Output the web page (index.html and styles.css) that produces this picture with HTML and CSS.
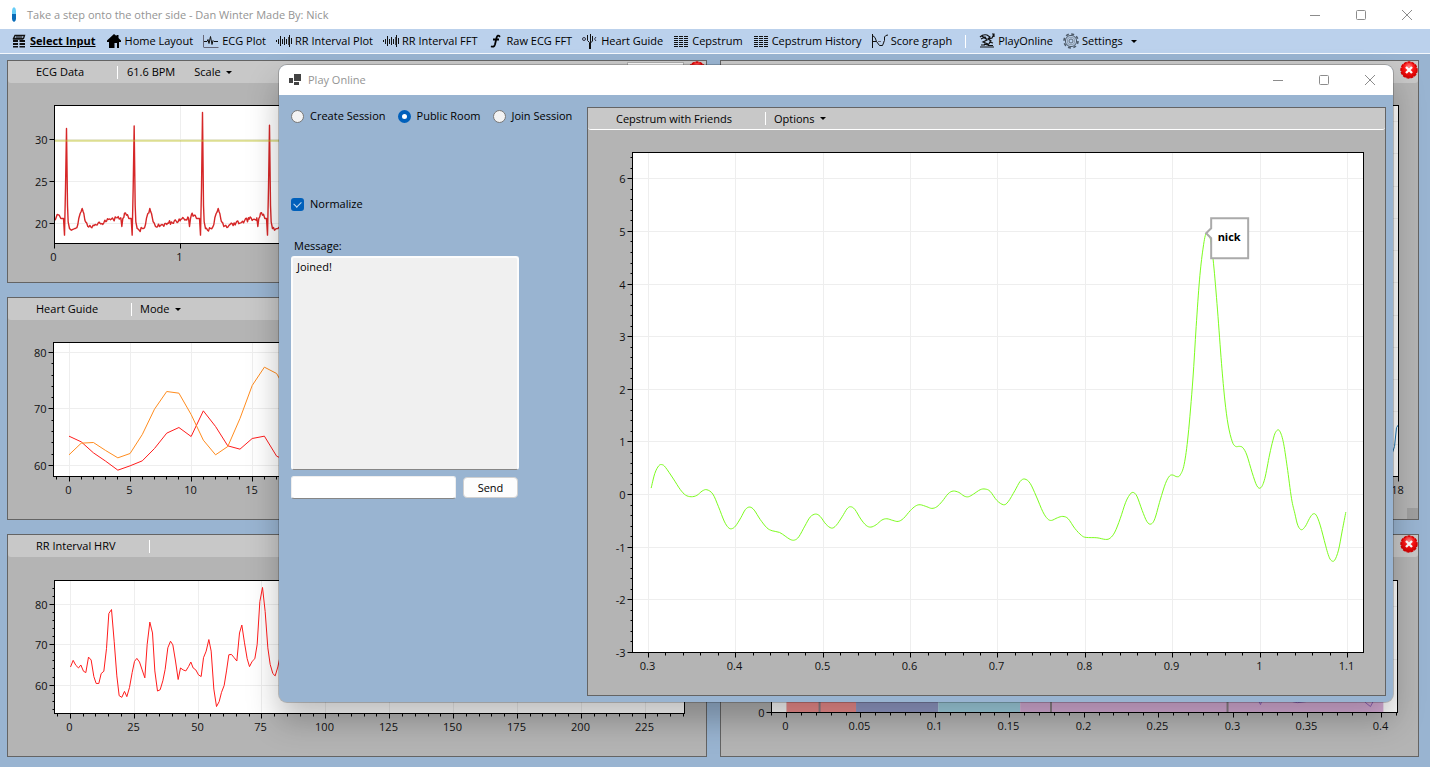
FILE: index.html
```html
<!DOCTYPE html>
<html lang="en">
<head>
<meta charset="utf-8">
<title>Take a step onto the other side</title>
<link rel="stylesheet" href="styles.css">
</head>
<body>
<svg class="defs" aria-hidden="true">
  <defs>
    <radialGradient id="ball" cx="50%" cy="30%" r="70%">
      <stop offset="0" stop-color="#ff8a8a"/><stop offset=".45" stop-color="#fb1414"/><stop offset="1" stop-color="#d00000"/>
    </radialGradient>
    <symbol id="i-close" viewBox="0 0 18 18">
      <circle cx="9" cy="9" r="8" fill="url(#ball)" stroke="#d40000" stroke-width="1.4" stroke-dasharray="3 1"/>
      <path d="M6 6l6 6M12 6l-6 6" stroke="#fff" stroke-width="2.4"/>
    </symbol>
    <symbol id="i-min" viewBox="0 0 12 12"><path d="M1 6.5h10" stroke="#8c8c8c" fill="none"/></symbol>
    <symbol id="i-max" viewBox="0 0 12 12"><rect x="1.5" y="1.5" width="9" height="9" rx="1" stroke="#8c8c8c" fill="none"/></symbol>
    <symbol id="i-x" viewBox="0 0 12 12"><path d="M1 1l10 10M11 1L1 11" stroke="#8c8c8c" fill="none"/></symbol>
    <symbol id="i-wave" viewBox="0 0 16 16"><path d="M.5 7v2M2.500 6v5M4.500 3v10M6.500 6v5M8.500 4v8M10.500 6v5M13.500 2v12M15.500 5v6" stroke="#111"/><path d="M12.500 4v8" stroke="#555"/></symbol>
    <symbol id="i-cep" viewBox="0 0 16 16"><path d="M1 3.500h14M1 5.500h14M1 7.500h14M1 9.500h14M1 11.500h14M1 13.500h14" stroke="#111" stroke-dasharray="4 1"/></symbol>
  </defs>
</svg>

<div class="app">
  <header class="titlebar">
    <svg class="app-icon" viewBox="0 0 6 16"><path d="M3 0Q5 1 5 4v4H1V4Q1 1 3 0z" fill="#66cdf7"/><path d="M1 7h4v5Q5 14 3 15Q1 14 1 12z" fill="#0a6cb8"/></svg>
    <h1 class="titlebar-text">Take a step onto the other side - Dan Winter Made By: Nick</h1>
    <div class="win-buttons">
      <button aria-label="Minimize"><svg><use href="#i-min"/></svg></button>
      <button aria-label="Maximize"><svg><use href="#i-max"/></svg></button>
      <button aria-label="Close"><svg><use href="#i-x"/></svg></button>
    </div>
  </header>

  <nav class="toolbar">
    <button class="tool tool-active"><svg viewBox="0 0 16 16"><path d="M2.500 5.500L4 2.500h9.500l-1 3zM2 6h10" fill="none" stroke="#111" stroke-width="1.300"/><path d="M5 4h6" stroke="#111"/><path d="M2 7h5v2H2zM8.500 7H14v2H8.500zM2 10h5v2H2zM8.500 10H14v2H8.500zM2 13h5v1.500H2zM8.500 13H14v1.500H8.500z" fill="#111"/></svg>Select Input</button>
    <button class="tool"><svg viewBox="0 0 16 16"><path d="M1 7.500L8 1l2.500 2V2h2v3L15 7.500V9h-2v6h-2v-5H8.500v5H3V9H1z" fill="#000"/></svg>Home Layout</button>
    <button class="tool"><svg viewBox="0 0 16 16"><path d="M.5 2v12M.5 14.500h15" stroke="#667" fill="none"/><path d="M1 8.500h3l1-2 1 4 1.500-7 1.500 8 1-4 1 1h4" stroke="#111" fill="none"/></svg>ECG Plot</button>
    <button class="tool"><svg><use href="#i-wave"/></svg>RR Interval Plot</button>
    <button class="tool"><svg><use href="#i-wave"/></svg>RR Interval FFT</button>
    <button class="tool"><svg viewBox="0 0 16 16"><path d="M12 3.800Q9.500 1 8.500 5L7 11.500q-1 3.300-4 1.700M5 6.500h6" fill="none" stroke="#000" stroke-width="1.800"/></svg>Raw ECG FFT</button>
    <button class="tool"><svg viewBox="0 0 16 16"><path d="M5.500 2v5.500l2 2V16M8.500 1v15M10.500 3v5l-2 2" fill="none" stroke="#111"/><circle cx="2" cy="6" r="1.500" fill="none" stroke="#334"/><path d="M14 4q-3 2 0 4" fill="none" stroke="#334"/></svg>Heart Guide</button>
    <button class="tool"><svg><use href="#i-cep"/></svg>Cepstrum</button>
    <button class="tool"><svg><use href="#i-cep"/></svg>Cepstrum History</button>
    <button class="tool"><svg viewBox="0 0 16 16"><path d="M.5 1v14M.5 2.500q3 1 4 6H.5M4.500 8.500l3 4h3l2-5V4q1-2 3.500-2" fill="none" stroke="#111"/><path d="M6 8.500h3M11 8.500h2" stroke="#667"/></svg>Score graph</button>
    <span class="sep"></span>
    <button class="tool"><svg viewBox="0 0 16 16"><path d="M1 4q3-3 7-2l3 2-2 2 3 2-3 4-4-1M2 6l4-2 2 3-4 2 5 2M10 6l3-1 2-4M13 1h2v3M3 3l4 3M1 14h14M2 12h4M9 12.500h5M10 9l4 1" fill="none" stroke="#111" stroke-width="1.200"/></svg>PlayOnline</button>
    <button class="tool tool-menu"><svg viewBox="0 0 16 16"><circle cx="8" cy="8" r="7" fill="none" stroke="#4d5a68" stroke-width="1.600" stroke-dasharray="3 2.500"/><circle cx="8" cy="8" r="5.600" fill="none" stroke="#4d5a68"/><circle cx="8" cy="8" r="3.800" fill="none" stroke="#8d9aa8"/><circle cx="8" cy="8" r="2" fill="none" stroke="#5d6a78"/></svg>Settings<i class="caret"></i></button>
  </nav>

  <main class="workspace">
    <section class="panel">
      <div class="panel-head">
        <h2>ECG Data</h2><span class="sep"></span><span class="bpm">61.6 BPM</span>
        <button class="menu">Scale<i class="caret"></i></button>
        <select class="channel" aria-label="Channel"><option></option></select>
        <button class="close" aria-label="Close ECG Data"><svg><use href="#i-close"/></svg></button>
      </div>
      <div class="chart" data-chart="ecg"></div>
    </section>
    <section class="panel panel-tall">
      <div class="panel-head"><button class="close" aria-label="Close Cepstrum"><svg><use href="#i-close"/></svg></button></div>
      <div class="chart" data-chart="cepstrum"></div>
      <span class="grip"></span>
    </section>
    <section class="panel">
      <div class="panel-head"><h2>Heart Guide</h2><span class="sep"></span><button class="menu">Mode<i class="caret"></i></button></div>
      <div class="chart" data-chart="heart"></div>
    </section>
    <section class="panel">
      <div class="panel-head"><h2>RR Interval HRV</h2><span class="sep"></span></div>
      <div class="chart" data-chart="rr"></div>
    </section>
    <section class="panel">
      <div class="panel-head"><button class="close" aria-label="Close RR Interval FFT"><svg><use href="#i-close"/></svg></button></div>
      <div class="chart" data-chart="fft"></div>
    </section>
  </main>

  <div class="dialog" role="dialog" aria-labelledby="dialog-title">
    <header class="titlebar dialog-bar">
      <svg class="form-icon" viewBox="0 0 12 12"><path d="M0 4h4v5H0zM5 0h7v7H5zM5 8h5v3H5z" fill="#444"/></svg>
      <h2 class="titlebar-text" id="dialog-title">Play Online</h2>
      <div class="win-buttons">
        <button aria-label="Minimize"><svg><use href="#i-min"/></svg></button>
        <button aria-label="Maximize"><svg><use href="#i-max"/></svg></button>
        <button aria-label="Close"><svg><use href="#i-x"/></svg></button>
      </div>
    </header>
    <div class="dialog-body">
      <form class="side">
        <div class="modes">
          <label><input type="radio" name="mode">Create Session</label>
          <label><input type="radio" name="mode" checked>Public Room</label>
          <label><input type="radio" name="mode">Join Session</label>
        </div>
        <label class="normalize"><input type="checkbox" checked>Normalize</label>
        <label class="log-label" for="log">Message:</label>
        <textarea id="log" readonly>Joined!</textarea>
        <div class="send-row">
          <input type="text" aria-label="New message">
          <button type="button">Send</button>
        </div>
      </form>
      <section class="panel panel-friends">
        <div class="panel-head"><h2>Cepstrum with Friends</h2><span class="sep"></span><button class="menu">Options<i class="caret"></i></button></div>
        <div class="chart" data-chart="friends"></div>
      </section>
    </div>
  </div>
</div>
<script src="charts.js"></script>
</body>
</html>
```

FILE: styles.css
```css
* { box-sizing: border-box; }

body {
  margin: 0;
  font-family: "Open Sans", "Noto Sans", sans-serif;
  font-size: 11px;
  line-height: 16px;
  color: #000;
}

button, input, select, textarea { font: inherit; color: inherit; }
button { border: 0; padding: 0; background: none; }
h1, h2 { margin: 0; font-size: inherit; font-weight: normal; white-space: nowrap; }

.defs { position: absolute; width: 0; height: 0; }

.app {
  position: relative;
  display: flex;
  flex-direction: column;
  min-height: 100vh;
  background: #99b4d1;
}

.titlebar {
  display: flex;
  align-items: center;
  height: 29px;
  padding-left: 11px;
  background: #fff;
}
.app-icon { width: 6px; height: 16px; margin-right: 10px; }
.form-icon { width: 12px; height: 12px; margin-right: 7px; }
.titlebar-text { color: #949494; }
.win-buttons { display: flex; margin-left: auto; }
.win-buttons button { display: grid; place-items: center; width: 46px; height: 27px; }
.win-buttons svg { width: 12px; height: 12px; }

.toolbar {
  display: flex;
  align-items: center;
  gap: 10px;
  height: 25px;
  padding-left: 11px;
  background: #bbd1ec;
  border-bottom: 1px solid #f4f8fd;
}
.tool { display: flex; align-items: center; gap: 3px; white-space: nowrap; }
.tool svg { width: 16px; height: 16px; }
.tool-active { font-weight: bold; text-decoration: underline; }
.toolbar .sep { margin: 0 3px; }

.sep { width: 1px; height: 13px; background: #fff; }
.caret {
  margin-left: 5px;
  border: 3px solid transparent;
  border-top-color: #000;
  border-bottom: 0;
}

.workspace {
  flex: 1;
  display: grid;
  grid-template-columns: 1fr 1fr;
  grid-template-rows: repeat(3, minmax(0, 1fr));
  gap: 14px 13px;
  padding: 6px 11px 10px 7px;
}

.panel {
  position: relative;
  display: flex;
  flex-direction: column;
  min-width: 0;
  background: #b4b4b4;
  border: 1px solid #646464;
}
.panel-tall { grid-row: span 2; }
.panel-head {
  display: flex;
  align-items: center;
  height: 22px;
  padding-left: 28px;
  background: #c8c8c8;
  border-radius: 0 0 3px 3px;
}
.panel-head h2 { margin-right: 33px; }
.bpm { margin: 0 19px 0 9px; }
.menu { display: flex; align-items: center; }
.sep + .menu { margin-left: 8px; }
.channel {
  align-self: flex-start;
  width: 57px;
  height: 20px;
  margin: 1px 4px 0 auto;
  background: #f4f4f4;
  border: 1px solid #aaa;
}
.close { align-self: flex-start; width: 18px; height: 18px; margin-left: auto; }
.channel + .close { margin-left: 0; }
.close svg { display: block; width: 18px; height: 18px; }
.grip { position: absolute; right: 0; bottom: 0; width: 11px; height: 11px; background: #9f9f9f; }

.chart { flex: 1; min-height: 0; overflow: hidden; }
.chart svg { display: block; }
.chart text { fill: #111; }
.chart .callout { font-weight: bold; fill: #000; }

.dialog {
  position: absolute;
  inset: 65px 37px 65px 279px;
  display: flex;
  flex-direction: column;
  overflow: hidden;
  background: #99b4d1;
  border-radius: 8px;
  box-shadow: 0 0 0 1px rgba(0, 0, 0, .2), 0 18px 32px rgba(0, 0, 0, .26);
}
.dialog-bar { flex: none; height: 30px; padding-left: 10px; }

.dialog-body { flex: 1; display: flex; min-height: 0; }
.side {
  flex: none;
  display: flex;
  flex-direction: column;
  align-items: flex-start;
  width: 308px;
  padding: 13px 0 0 12px;
}
.modes { display: flex; gap: 12px; }
.modes label, .normalize { display: flex; align-items: center; gap: 6px; white-space: nowrap; }
.side input[type="radio"], .side input[type="checkbox"] { width: 13px; height: 13px; margin: 0; }
.side input[type="radio"] {
  appearance: none;
  background: #f3f3f3;
  border: 1px solid #777;
  border-radius: 50%;
}
.side input[type="radio"]:checked { background: #fff; border: 4px solid #0060bb; }
.side input[type="checkbox"] {
  appearance: none;
  display: grid;
  place-items: center;
  background: #0060bb;
  border-radius: 3px;
}
.side input[type="checkbox"]::after {
  content: "";
  width: 6px;
  height: 4px;
  margin-top: -2px;
  border: solid #c4dcf2;
  border-width: 0 0 1px 1px;
  rotate: -45deg;
}
.normalize { margin-top: 72px; }
.log-label { margin: 26px 0 2px 3px; }
.side textarea {
  width: 228px;
  height: 214px;
  padding: 1px 4px;
  resize: none;
  background: #f0f0f0;
  border: 2px solid #fcfcfc;
  border-bottom: 1px solid #868686;
  border-radius: 3px;
  outline: 0;
}
.send-row { display: flex; align-items: center; gap: 7px; margin-top: 6px; }
.send-row input {
  width: 165px;
  height: 23px;
  background: #fff;
  border: 1px solid #eee;
  border-bottom-color: #868686;
  border-radius: 3px;
}
.send-row button {
  width: 55px;
  height: 21px;
  background: #fdfdfd;
  border: 1px solid #d0d0d0;
  border-radius: 4px;
}

.panel-friends { flex: 1; margin: 12px 7px 6px 0; }
.panel-friends .panel-head { border-bottom: 1px solid #fff; }
```

FILE: charts.js
```js
const NS = "http://www.w3.org/2000/svg";

// One heartbeat, as offsets from the R peak.
const BEAT = [[-9, 490], [-6, 540], [-3, 400], [0, 0], [3, 450], [5, 500], [9, 520], [15, 525], [25, 520], [34, 508], [41, 475], [47, 460],
  [52, 475], [57, 500], [64, 514], [80, 510], [100, 504], [120, 498], [140, 492], [163, 488], [166, 514], [169, 490], [174, 474], [180, 480], [187, 490]];

function ecgPoints() {
  const peaks = [[199, 220], [402, 212], [607, 172], [808, 210], [1011, 215], [1214, 220], [1417, 200], [1620, 214], [1823, 210]];
  const points = [[165, 495], [171, 478], [177, 480], [182, 490]];
  let seed = 7;
  const noise = () => (seed = (seed * 73 + 41) % 997) / 997 * 14 - 7;
  for (const [px, top] of peaks) {
    BEAT.forEach(([dx, y], i) => {
      points.push([px + dx, i === 3 ? top : y]);
      const next = BEAT[i + 1];
      if (i > 5 && next) {
        for (let x = dx + 3; x < next[0] - 1; x += 3) {
          points.push([px + x, y + (next[1] - y) * (x - dx) / (next[0] - dx) + noise()]);
        }
      }
    });
  }
  return points;
}

const pairs = text => text.trim().split(/\s+/).map(p => p.split(",").map(Number));
const indexed = list => list.map((y, x) => [x, y]);

// margin: top, right, bottom, left. x and y: axis range, label step, minor step.
// box: left, right, bottom, top of the plot area in the units of the points.
const CHARTS = {
  ecg: {
    margin: [22, 22, 39, 46], x: [0, 5, 1, 0], y: [17.6, 34.05, 5, 0],
    level: 29.85,
    series: [{ color: "#d62728", width: 1.4, box: [163, 2053, 565, 151], points: ecgPoints() }]
  },
  heart: {
    margin: [22, 22, 43, 45], x: [-1.27, 50.4, 5, 1], y: [58.05, 81.77, 10, 2],
    series: [
      { color: "#ff1c1c", box: [-1.27, 50.4, 574, 172], points: indexed([453, 470, 503, 528, 555, 542, 527, 490, 444, 427, 454, 377, 424, 482, 492, 460, 453, 513, 530]) },
      { color: "#ff8c1e", box: [-1.27, 50.4, 574, 172], points: indexed([509, 474, 472, 496, 518, 505, 448, 372, 319, 324, 388, 465, 509, 484, 400, 301, 246, 265, 330]) }
    ]
  },
  rr: {
    margin: [23, 22, 43, 46], x: [-6.2, 240.4, 25, 5], y: [52.97, 85.9, 10, 2],
    series: [{
      color: "#ff1c1c", box: [163, 2053, 569, 166], points: pairs(`211,428 219,408 227,423 235,431 242,422 250,441 257,445 265,398 273,407 281,457 288,478 296,478 303,448 311,441
        319,372 326,266 334,254 342,350 350,455 357,515 365,520 373,502 380,518 388,490 396,445 403,411 410,402 418,413 426,437 434,461 441,360 449,292 457,325
        464,440 472,501 480,497 488,470 495,435 503,370 511,350 518,361 526,410 534,466 541,431 549,437 557,440 565,427 572,413 579,431 587,437 595,452 603,457
        610,400 618,380 626,345 633,380 641,495 649,548 657,533 664,505 672,484 679,440 686,391 694,390 702,400 710,410 718,325 725,301 733,355 741,403 748,427
        756,411 764,403 771,360 779,230 787,187 795,260 803,370 810,420 818,448 825,455 833,428 840,395`)
    }]
  },
  cepstrum: {
    margin: [22, 21, 43, 45], x: [0, 18, 2, 0], y: [-1, 10.5, 1, 0],
    series: [{ color: "#1f77b4", box: [765, 1397, 476, 104], points: [[1385, 470], [1393, 446], [1395, 427], [1397, 424]] }]
  },
  fft: {
    margin: [23, 22, 44, 50], x: [-0.0101, 0.4105, 0.05, 0.01], y: [0, 2.48, 1, 0],
    bands: [[0, 0.0467, "#f18f8f"], [0.0467, 0.102, "#949cc9"], [0.102, 0.157, "#a3d4e5"], [0.157, 0.401, "#dab0da"]],
    marks: [0.0222, 0.1777, 0.2963],
    series: [{ color: "#9467bd", box: [771, 1397, 713, 579], points: [[1248, 690], [1257, 699], [1260, 705], [1262, 699], [1288, 690], [1292, 702], [1297, 703], [1305, 702], [1309, 698], [1360, 690], [1365, 703], [1370, 707], [1373, 701], [1376, 690]] }]
  },
  friends: {
    margin: [22, 22, 43, 44], x: [0.2817, 1.1183, 0.1, 0.02], y: [-3, 6.5, 1, 0.2],
    callout: [1878, 100, "nick"],
    series: [{
      color: "#7cfc1e", smooth: true, box: [157, 2350, 1357, -142], points: pairs(`213,864 224,820 236,797 246,794 256,802 280,837 300,868 316,885 333,890 350,886 366,873 380,869 398,882
        415,920 432,963 444,982 454,986 466,978 482,953 496,928 509,921 522,930 540,958 560,983 576,992 598,997 615,1008 630,1018 643,1020 656,1010 674,978
        690,951 706,942 720,949 737,972 754,984 768,976 786,950 800,927 811,920 824,928 842,957 858,976 872,981 888,974 905,960 920,956 938,961 954,964 970,955
        990,932 1006,918 1020,914 1040,920 1055,925 1070,920 1086,904 1104,881 1119,873 1136,877 1152,888 1165,890 1180,882 1200,869 1215,867 1230,874 1250,901
        1270,914 1284,905 1304,872 1320,844 1334,837 1350,850 1368,888 1388,935 1402,956 1414,961 1432,953 1448,949 1464,956 1484,985 1504,1006 1518,1012
        1550,1013 1576,1018 1590,1014 1604,996 1620,956 1636,908 1648,885 1658,877 1670,888 1686,931 1700,964 1712,972 1724,956 1740,900 1756,850 1768,828
        1778,825 1790,830 1800,825 1812,793 1824,705 1838,540 1848,380 1858,240 1868,150 1878,100 1890,115 1900,190 1912,330 1924,490 1934,600 1944,675
        1956,724 1966,739 1978,739 1988,743 2000,765 2016,818 2030,857 2042,863 2054,835 2068,765 2078,722 2086,697 2097,691 2109,724 2121,800 2134,895
        2144,940 2153,976 2164,989 2176,978 2188,955 2198,942 2208,945 2220,975 2236,1035 2244,1063 2252,1080 2263,1081 2275,1050 2286,993 2297,936`)
    }]
  }
};

function add(parent, name, attrs, text) {
  const node = document.createElementNS(NS, name);
  for (const key in attrs) node.setAttribute(key, attrs[key]);
  if (text !== undefined) node.textContent = text;
  parent.append(node);
  return node;
}

function steps(min, max, step) {
  const out = [];
  if (!step) return out;
  for (let i = Math.ceil(min / step - 1e-6); i * step <= max + 1e-6; i++) out.push(+(i * step).toFixed(4));
  return out;
}

function curve(points, smooth) {
  if (!smooth) return "M" + points.map(p => p.join(" ")).join("L");
  let d = "M" + points[0].join(" ");
  for (let i = 0; i < points.length - 1; i++) {
    const a = points[i - 1] || points[i], b = points[i], c = points[i + 1], e = points[i + 2] || c;
    d += `C${b[0] + (c[0] - a[0]) / 6} ${b[1] + (c[1] - a[1]) / 6} ${c[0] - (e[0] - b[0]) / 6} ${c[1] - (e[1] - b[1]) / 6} ${c[0]} ${c[1]}`;
  }
  return d;
}

function draw(host) {
  const chart = CHARTS[host.dataset.chart];
  const W = host.clientWidth, H = host.clientHeight;
  host.replaceChildren();
  const svg = add(host, "svg", { width: W, height: H });
  const [mt, mr, mb, ml] = chart.margin;
  const l = ml + 0.5, t = mt + 0.5, r = W - mr + 0.5, b = H - mb + 0.5;
  const [x0, x1, xs, xm] = chart.x, [y0, y1, ys, ym] = chart.y;
  const X = v => l + (v - x0) / (x1 - x0) * (r - l);
  const Y = v => b - (v - y0) / (y1 - y0) * (b - t);
  const snap = v => Math.floor(v) + 0.5;

  add(svg, "rect", { x: l, y: t, width: r - l, height: b - t, fill: "#fff" });
  let grid = "", ticks = "";
  for (const v of steps(x0, x1, xs)) {
    const x = snap(X(v));
    grid += `M${x} ${t}V${b}`;
    ticks += `M${x} ${b}v5`;
    add(svg, "text", { x: x - 1, y: b + 17, "text-anchor": "middle" }, v);
  }
  for (const v of steps(y0, y1, ys)) {
    const y = snap(Y(v));
    grid += `M${l} ${y}H${r}`;
    ticks += `M${l} ${y}h-5`;
    add(svg, "text", { x: l - 7, y: y + 4, "text-anchor": "end" }, v);
  }
  for (const v of steps(x0, x1, xm)) ticks += `M${snap(X(v))} ${b}v3`;
  for (const v of steps(y0, y1, ym)) ticks += `M${l} ${snap(Y(v))}h-2`;
  add(svg, "path", { d: grid, stroke: "#eee", fill: "none" });

  for (const [from, to, fill] of chart.bands || []) add(svg, "rect", { x: X(from), y: t, width: X(to) - X(from), height: b - t, fill });
  for (const v of chart.marks || []) add(svg, "path", { d: `M${X(v)} ${t}V${b}`, stroke: "#8c8088", "stroke-width": 2 });

  for (const s of chart.series) {
    const [bl, br, bb, bt] = s.box;
    const points = s.points.map(([x, y]) => [l + (x - bl) / (br - bl) * (r - l), b - (y - bb) / (bt - bb) * (b - t)]);
    add(svg, "path", { d: curve(points, s.smooth), fill: "none", stroke: s.color, "stroke-width": s.width || 1, "stroke-linejoin": "round" });
  }
  if (chart.level) add(svg, "path", { d: `M${l} ${Y(chart.level)}H${r}`, stroke: "#bcbd22", "stroke-opacity": 0.5, "stroke-width": 2 });

  add(svg, "rect", { x: l, y: t, width: r - l, height: b - t, fill: "none", stroke: "#000" });
  add(svg, "path", { d: ticks, stroke: "#000", fill: "none" });

  if (chart.callout) {
    const [bl, br, bb, bt] = chart.series[0].box;
    const [cx, cy, label] = chart.callout;
    const x = l + (cx - bl) / (br - bl) * (r - l), y = b - (cy - bb) / (bt - bb) * (b - t);
    add(svg, "path", { d: `M${x} ${y}l5 -5v-10h37v40h-37v-20z`, fill: "#fff", stroke: "#aaa", "stroke-width": 2 });
    add(svg, "text", { x: x + 23, y: y + 8, "text-anchor": "middle", class: "callout" }, label);
  }
}

const watcher = new ResizeObserver(entries => entries.forEach(e => draw(e.target)));
document.querySelectorAll(".chart").forEach(host => { draw(host); watcher.observe(host); });
```
